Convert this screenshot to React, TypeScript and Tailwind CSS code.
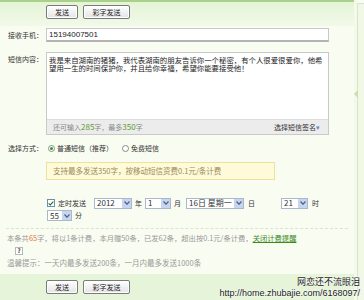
import React from "react";

const F = { fontFamily: '"Noto Sans CJK SC", "Liberation Sans", sans-serif' };

function Btn({ children, w }: { children: React.ReactNode; w: string }) {
  return (
    <div className={`${w} h-[14px] border border-[#7a7a7a] rounded-[2px] bg-gradient-to-b from-[#ffffff] to-[#e4e4e4] flex items-center justify-center text-[7px] leading-none text-[#222] shadow-[inset_0_0_0_1px_#ffffff]`}>
      {children}
    </div>
  );
}

function Sel({ text, w }: { text: string; w: string }) {
  return (
    <div className={`${w} h-[11px] border border-[#a9b8cc] bg-white flex items-center justify-between`}>
      <span className="pl-[2px] text-[8px] leading-none text-[#333]">{text}</span>
      <span className="w-[9px] h-[9px] bg-[#c7d5f1] flex items-center justify-center">
        <svg width="6" height="4" viewBox="0 0 6 4"><path d="M0.5 0.5 L3 3.2 L5.5 0.5" stroke="#4d6185" strokeWidth="1.2" fill="none" /></svg>
      </span>
    </div>
  );
}

export default function App() {
  return (
    <div className="w-[364px] h-[300px] overflow-hidden relative bg-[#f9fcf1] flex" style={F}>
      <div className="w-[354px] flex flex-col">
        <div className="h-[26px] border-t-2 border-[#a8d28a] bg-gradient-to-b from-[#e4f4d6] to-[#f1f9e8] flex items-start pt-[3px] pl-[46px] gap-[5px]">
          <Btn w="w-[32px]">发送</Btn>
          <Btn w="w-[47px]">彩字发送</Btn>
        </div>
        <div className="flex items-start mt-[2px]">
          <div className="w-[46px] pl-[8px] text-[7px] leading-[14px] text-[#333] whitespace-nowrap">接收手机：</div>
          <div className="w-[283px] h-[14px] bg-white border border-[#c9c9c9] border-b-[2px] border-b-[#b4b4b4] flex items-center pl-[2px] text-[8px] text-[#222]" style={{ fontFamily: '"Liberation Sans", sans-serif' }}>
            15194007501
          </div>
        </div>
        <div className="flex items-start mt-[10px]">
          <div className="w-[46px] pl-[8px] pt-[3px] text-[7px] leading-[8px] text-[#333] whitespace-nowrap">短信内容：</div>
          <div className="w-[283px] h-[83px] bg-white border border-[#c9c9c9] flex flex-col">
            <div className="flex-1 px-[2px] pt-[3px] text-[7.4px] leading-[8px] text-[#222]">
              我是来自湖南的猪猪，我代表湖南的朋友告诉你一个秘密，有个人很爱很爱你，他希望用一生的时间保护你，并且给你幸福，希望你能要接受他！
            </div>
            <div className="h-[15px] bg-[#ececec] border-t border-[#dcdcdc] flex items-center justify-between pl-[6px] pr-[8px] text-[7px] text-[#888]">
              <span>还可输入<span className="text-[#5a9a2a] text-[8px]">285</span>字，最多<span className="text-[#5a9a2a] text-[8px]">350</span>字</span>
              <span className="text-[#333]">选择短信签名<span className="text-[#6b86b8]">▾</span></span>
            </div>
          </div>
        </div>
        <div className="flex items-center mt-[8px] h-[10px] text-[7px] text-[#333]">
          <div className="w-[48px] pl-[8px] whitespace-nowrap">选择方式：</div>
          <span className="w-[7px] h-[7px] rounded-full border border-[#7a9a7a] bg-white flex items-center justify-center">
            <span className="w-[3px] h-[3px] rounded-full bg-[#3c8a3c]"></span>
          </span>
          <span className="ml-[2px]">普通短信（推荐）</span>
          <span className="ml-[9px] w-[7px] h-[7px] rounded-full border border-[#8a8a8a] bg-white"></span>
          <span className="ml-[2px]">免费短信</span>
        </div>
        <div className="ml-[46px] mt-[9px] w-[229px] h-[18px] bg-[#fffbd8] border border-[#ece2a0] flex items-center pl-[6px] text-[7.5px] text-[#9a8a60] whitespace-nowrap">
          支持最多发送350字，按移动短信资费0.1元/条计费
        </div>
        <div className="flex items-center mt-[17px] ml-[47px] h-[12px] text-[7px] text-[#333] whitespace-nowrap">
          <span className="w-[8px] h-[8px] border border-[#6b8fb0] bg-white flex items-center justify-center">
            <svg width="6" height="5" viewBox="0 0 6 5"><path d="M0.6 2.4 L2.3 4 L5.4 0.7" stroke="#2b6a2b" strokeWidth="1.1" fill="none" /></svg>
          </span>
          <span className="ml-[3px] w-[36px]">定时发送</span>
          <Sel text="2012" w="w-[38px]" />
          <span className="ml-[3px] w-[10px]">年</span>
          <Sel text="1" w="w-[26px]" />
          <span className="ml-[3px] w-[12px]">月</span>
          <Sel text="16日 星期一" w="w-[58px]" />
          <span className="ml-[4px] w-[33px]">日</span>
          <Sel text="21" w="w-[27px]" />
          <span className="ml-[4px]">时</span>
        </div>
        <div className="flex items-center mt-[1px] ml-[47px] h-[11px] text-[7px] text-[#333]">
          <Sel text="55" w="w-[25px]" />
          <span className="ml-[3px]">分</span>
        </div>
        <div className="mt-[7px] ml-[6px] mr-[6px] border-t border-dashed border-[#dde3cf]"></div>
        <div className="mt-[5px] pl-[7px] text-[7.3px] leading-[9px] text-[#999] whitespace-nowrap">
          本条共<span className="text-[#f07030]">65</span>字，将以1条计费，本月赠50条，已发62条，超出按0.1元/条计费，<span className="text-[#3a8a1e] underline">关闭计费提醒</span>
        </div>
        <div className="mt-[4px] ml-[15px] w-[8px] h-[8px] border border-[#b9b9b9] bg-white flex items-center justify-center text-[6px] font-bold text-[#333] leading-none">?</div>
        <div className="mt-[3px] pl-[7px] text-[7.5px] leading-[9px] text-[#999] whitespace-nowrap">
          温馨提示：一天内最多发送200条，一月内最多发送1000条
        </div>
        <div className="mt-[7px] flex-1 bg-[#e6f4d9] flex items-start pt-[6px] pl-[46px] gap-[5px]">
          <Btn w="w-[32px]">发送</Btn>
          <Btn w="w-[47px]">彩字发送</Btn>
        </div>
      </div>
      <div className="flex-1 flex">
        <div className="w-[3px] bg-[#f4f9ec]"></div>
        <div className="flex-1 border-l border-t border-[#d6e7c4] mt-[3px] bg-[#f1f8e6] relative">
          <div className="absolute left-[-4px] top-[86px] w-0 h-0 border-y-[4px] border-y-transparent border-r-[4px] border-r-[#c8e0b0]"></div>
        </div>
      </div>
      <div className="absolute right-[4px] bottom-[2px] flex flex-col items-end gap-[1px] text-[#1a1a1a]" style={{ textShadow: "0 0 2px #fff, 0 0 2px #fff" }}>
        <span className="text-[9px] leading-[10px]">网恋还不流眼泪</span>
        <span className="text-[9px] leading-[10px]" style={{ fontFamily: '"Liberation Sans", sans-serif' }}>http://home.zhubajie.com/6168097/</span>
      </div>
    </div>
  );
}
